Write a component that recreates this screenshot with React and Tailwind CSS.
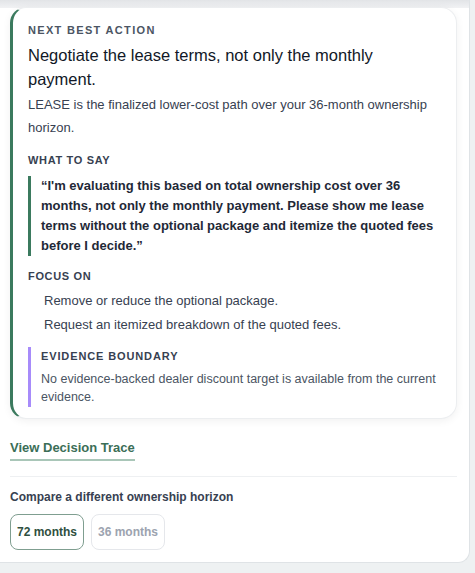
import React, { useState } from 'react';

const focusItems = [
  'Remove or reduce the optional package.',
  'Request an itemized breakdown of the quoted fees.',
];

const horizons = ['72 months', '36 months'];

const App = () => {
  const [horizon, setHorizon] = useState('72 months');

  return (
    <div className="min-h-screen bg-[#eef1f2] font-['Liberation_Sans',Arial,sans-serif]">
      <div className="w-[470px] bg-white border-r border-b border-[#dfe3e6] rounded-br-xl">
        {/* top shade from the header above */}
        <div className="h-2 bg-gradient-to-b from-[#e2e4e7] to-[#f1f2f4]" />

        <div className="px-[10px] pb-3">
          {/* Action card */}
          <div className="-mt-px w-[447px] bg-white rounded-2xl border border-[#eceef0] border-l-[3px] border-l-[#3b7a5e] shadow-[0_2px_8px_rgba(0,0,0,0.06)] pl-[15px] pr-4 pt-[14px] pb-[11px]">
            <p className="text-[11px] font-bold tracking-[0.12em] text-[#4b5563] leading-4">NEXT BEST ACTION</p>
            <h2 className="mt-[5px] text-[16.5px] leading-6 text-[#111827]">
              Negotiate the lease terms, not only the monthly payment.
            </h2>
            <p className="mt-[2px] text-[13px] leading-[23px] text-[#374151]">
              LEASE is the finalized lower-cost path over your 36-month ownership horizon.
            </p>

            <p className="mt-[13px] text-[11px] font-bold tracking-[0.06em] text-[#374151] leading-4">WHAT TO SAY</p>
            <blockquote className="mt-[8px] border-l-[3px] border-[#3b7a5e] pl-[10px] text-[13px] font-bold leading-5 text-[#1f2937]">
              “I'm evaluating this based on total ownership cost over 36 months, not only the monthly payment. Please show me lease terms without the optional package and itemize the quoted fees before I decide.”
            </blockquote>

            <p className="mt-[12px] text-[11px] font-bold tracking-[0.06em] text-[#374151] leading-4">FOCUS ON</p>
            <ul className="mt-[5px] pl-4">
              {focusItems.map((item) => (
                <li key={item} className="text-[13px] leading-6 text-[#374151]">{item}</li>
              ))}
            </ul>

            <div className="mt-[10px] border-l-[3px] border-[#a78bfa] pl-[10px] py-[1px]">
              <p className="text-[11px] font-bold tracking-[0.08em] text-[#374151] leading-4">EVIDENCE BOUNDARY</p>
              <p className="mt-[6px] text-[12.5px] leading-[18px] text-[#4b5563]">
                No evidence-backed dealer discount target is available from the current evidence.
              </p>
            </div>
          </div>

          <div className="mt-[16px]">
            <button className="text-[13px] font-bold text-[#3b6e57] leading-5 border-b-2 border-[#a9c6b8] pb-[1px]">
              View Decision Trace
            </button>
          </div>

          <div className="mt-[15px] w-[447px] border-t border-[#eef0f2]" />

          <p className="mt-[12px] text-[12px] font-bold text-[#374151] leading-4">Compare a different ownership horizon</p>
          <div className="mt-[9px] flex gap-[7px]">
            {horizons.map((h) => (
              <button
                key={h}
                onClick={() => setHorizon(h)}
                className={`h-9 w-[74px] rounded-lg border text-[12px] font-bold ${
                  horizon === h
                    ? 'border-[#7f9e90] text-[#2f4f40]'
                    : 'border-[#e5e7eb] text-[#9ca3af]'
                }`}
              >
                {h}
              </button>
            ))}
          </div>
        </div>
      </div>
    </div>
  );
};

export default App;
